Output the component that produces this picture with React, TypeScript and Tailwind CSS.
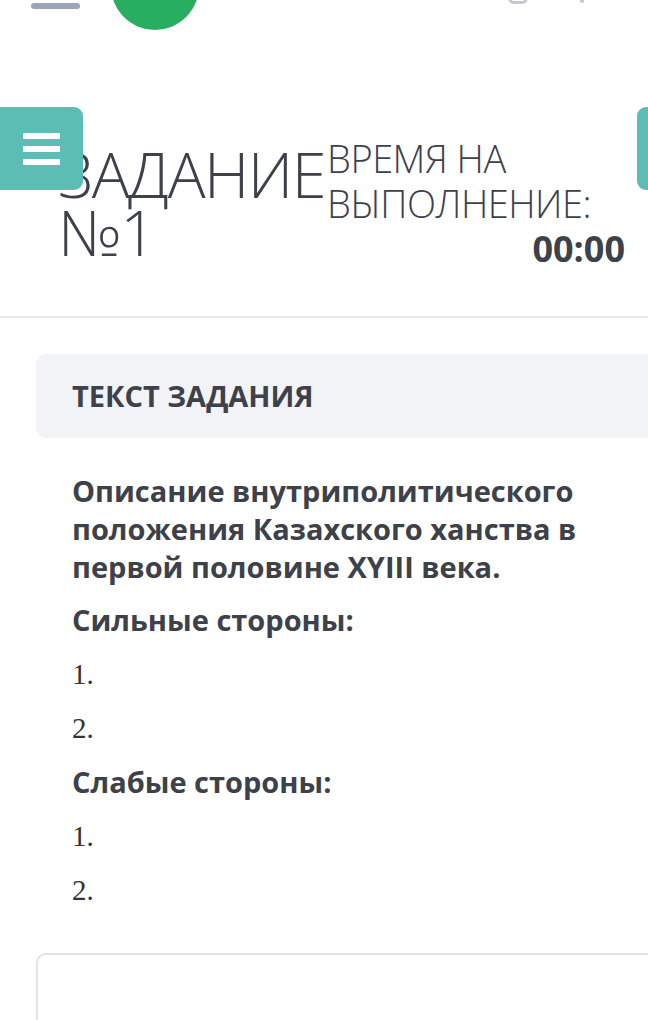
const sans = "font-['Open_Sans','Noto_Sans',sans-serif]";
const serif = "font-['Liberation_Serif','DejaVu_Serif',serif]";

function Hamburger() {
    return (
        <div className="flex flex-col gap-[7px]">
            <span className="block h-[6px] w-[37px] rounded-[1px] bg-white" />
            <span className="block h-[6px] w-[37px] rounded-[1px] bg-white" />
            <span className="block h-[6px] w-[37px] rounded-[1px] bg-white" />
        </div>
    );
}

export default function App() {
    const strong = ["1.", "2."];
    const weak = ["1.", "2."];

    return (
        <div className={`relative h-[1020px] w-[648px] overflow-hidden bg-white text-[#3d4149] ${sans}`}>
            {/* top bar, cut off by the screen edge */}
            <div className="relative h-[70px]">
                <span className="absolute left-[31px] top-[3px] h-[6px] w-[49px] rounded-full bg-[#9aa6b4]" />
                <span className="absolute left-[111px] top-[-58px] h-[88px] w-[88px] rounded-full bg-[#27ae60]" />
                <span className="absolute left-[508px] top-[-8px] h-[12px] w-[20px] rounded-full border-[3px] border-[#c3c8ce]" />
                <span className="absolute left-[580px] top-[-3px] h-[6px] w-[4px] rounded-full bg-[#c3c8ce]" />
            </div>

            {/* header */}
            <div className="relative h-[248px] border-b-2 border-[#e6e7e9]">
                <div className="absolute left-[-10px] top-[37px] z-10 flex h-[83px] w-[93px] items-center justify-center rounded-[9px] bg-[#5cbdb4] pl-[10px]">
                    <Hamburger />
                </div>
                <div className="absolute left-[637px] top-[37px] z-10 h-[83px] w-[40px] rounded-[9px] bg-[#5cbdb4]" />

                <div className="flex items-start pt-[75px]">
                    <h1 className="ml-[58px] shrink-0 text-[63px] font-light leading-[58px] tracking-[-1.5px] text-[#3d4149]">
                        ЗАДАНИЕ
                        <br />
                        №1
                    </h1>
                    <div className="ml-[2px] mt-[-9px] flex flex-1 flex-col pr-[23px]">
                        <div className="text-[38px] font-light leading-[45px] tracking-[-0.5px]">
                            ВРЕМЯ НА
                            <br />
                            ВЫПОЛНЕНИЕ:
                        </div>
                        <div className="mt-[3px] self-end text-[36px] font-bold leading-[40px]">00:00</div>
                    </div>
                </div>
            </div>

            {/* task body */}
            <div className="pl-[36px] pt-[36px]">
                <div className="flex h-[84px] items-center rounded-l-[10px] bg-[#f1f3f6] pl-[36px]">
                    <h2 className="text-[29px] font-bold">ТЕКСТ ЗАДАНИЯ</h2>
                </div>

                <div className="pl-[36px] pr-[30px] pt-[34px]">
                    <p className="text-[29px] font-bold leading-[38px]">
                        Описание внутриполитического положения Казахского ханства в первой половине XYIII века.
                    </p>
                    <p className="mt-[15px] text-[29px] font-bold leading-[38px]">Сильные стороны:</p>
                    {strong.map((n, i) => (
                        <p key={"s" + i} className={`mt-[16px] text-[29px] leading-[38px] text-[#333] ${serif}`}>
                            {n}
                        </p>
                    ))}
                    <p className="mt-[16px] text-[29px] font-bold leading-[38px]">Слабые стороны:</p>
                    {weak.map((n, i) => (
                        <p key={"w" + i} className={`mt-[16px] text-[29px] leading-[38px] text-[#333] ${serif}`}>
                            {n}
                        </p>
                    ))}
                </div>

                <div className="mt-[44px] h-[120px] rounded-tl-[10px] border-l-2 border-t-2 border-[#e3e3e3]" />
            </div>
        </div>
    );
}
